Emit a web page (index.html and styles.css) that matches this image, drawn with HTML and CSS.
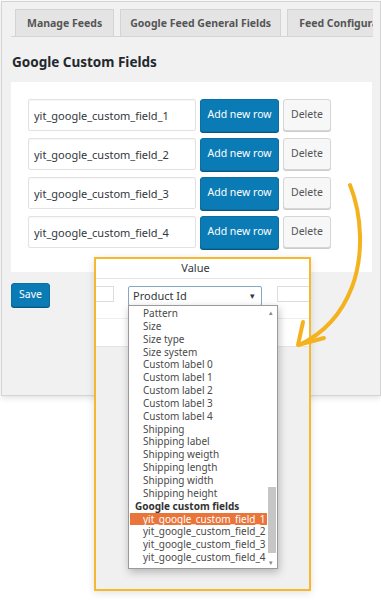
FILE: index.html
```html
<!DOCTYPE html>
<html lang="en">
<head>
      <meta charset="UTF-8">
      <meta name="viewport" content="width=device-width, initial-scale=1.0">
      <title>Google Custom Fields</title>
      <link rel="stylesheet" href="styles.css">
</head>
<body>
      <div class="frame">
            <ul class="tabs">
                  <li>Manage Feeds</li>
                  <li class="tab-wide">Google Feed General Fields</li>
                  <li>Feed Configuration</li>
            </ul>

            <h2 class="title">Google Custom Fields</h2>

            <div class="fields">
                  <div class="field-row">
                        <input class="field-input" type="text" value="yit_google_custom_field_1">
                        <button class="btn btn-primary">Add new row</button>
                        <button class="btn btn-secondary">Delete</button>
                  </div>
                  <div class="field-row">
                        <input class="field-input" type="text" value="yit_google_custom_field_2">
                        <button class="btn btn-primary">Add new row</button>
                        <button class="btn btn-secondary">Delete</button>
                  </div>
                  <div class="field-row">
                        <input class="field-input" type="text" value="yit_google_custom_field_3">
                        <button class="btn btn-primary">Add new row</button>
                        <button class="btn btn-secondary">Delete</button>
                  </div>
                  <div class="field-row">
                        <input class="field-input" type="text" value="yit_google_custom_field_4">
                        <button class="btn btn-primary">Add new row</button>
                        <button class="btn btn-secondary">Delete</button>
                  </div>
            </div>

            <button class="btn btn-primary btn-save">Save</button>
      </div>

      <div class="zoom-popup">
            <div class="zoom-head">Value</div>
            <div class="zoom-row">
                  <span class="stub stub-left"></span>
                  <div class="fake-select">Product Id<span class="caret">&#9662;</span></div>
                  <span class="stub stub-right"></span>
            </div>
            <div class="zoom-row zoom-row-empty"></div>

            <div class="option-list">
                  <ul class="options">
                        <li>Pattern</li>
                        <li>Size</li>
                        <li>Size type</li>
                        <li>Size system</li>
                        <li>Custom label 0</li>
                        <li>Custom label 1</li>
                        <li>Custom label 2</li>
                        <li>Custom label 3</li>
                        <li>Custom label 4</li>
                        <li>Shipping</li>
                        <li>Shipping label</li>
                        <li>Shipping weigth</li>
                        <li>Shipping length</li>
                        <li>Shipping width</li>
                        <li>Shipping height</li>
                        <li class="group">Google custom fields</li>
                        <li class="selected">yit_google_custom_field_1</li>
                        <li>yit_google_custom_field_2</li>
                        <li>yit_google_custom_field_3</li>
                        <li>yit_google_custom_field_4</li>
                  </ul>
                  <div class="scrollbar">
                        <span class="arrow-up">&#9652;</span>
                        <span class="thumb"></span>
                        <span class="arrow-down">&#9662;</span>
                  </div>
            </div>
      </div>

      <svg class="pointer" width="90" height="175" viewBox="0 0 90 175">
            <path d="M60 10 C 72 40, 74 80, 62 112 C 52 138, 35 158, 9 170" fill="none" stroke="#f5b21f" stroke-width="4" stroke-linecap="round"/>
            <path d="M13 147 L 8 170 L 34 163" fill="none" stroke="#f5b21f" stroke-width="4" stroke-linecap="round" stroke-linejoin="round"/>
      </svg>
</body>
</html>
```

FILE: styles.css
```css
:root {
	--frame: #f1f1f1;
	--border: #d4d4d4;
	--blue: #0a7bb5;
	--text: #32373c;
	--orange: #f5b82e;
}
html {
	box-sizing: border-box;
}
*, *:before, *:after {
	box-sizing: inherit;
}
body {
	margin: 0;
	background: #fff;
	font-family: "Noto Sans", "Open Sans", sans-serif;
	color: var(--text);
	position: relative;
	min-height: 606px;
	overflow: hidden;
}
.frame {
	margin: 1px 0 0 1px;
	width: 380px;
	height: 395px;
	background: var(--frame);
	border: 1px solid var(--border);
	box-shadow: 0 2px 6px rgba(0, 0, 0, 0.12);
	padding: 7px 0 0 9px;
}
.tabs {
	list-style: none;
	margin: 0 7px 0 0;
	padding: 0 0 0 4px;
	display: flex;
	gap: 6px;
	border-bottom: 1px solid var(--border);
	height: 28px;
	white-space: nowrap;
	overflow: hidden;
}
.tabs li {
	background: #e4e4e4;
	border: 1px solid var(--border);
	border-bottom: none;
	font-size: 10.5px;
	font-weight: 700;
	color: #555;
	padding: 0 11px;
	line-height: 27px;
	flex-shrink: 0;
}
.tabs .tab-wide {
	padding: 0 9px;
}
.title {
	margin: 15px 0 0 1px;
	font-size: 13.5px;
	font-weight: 700;
	color: #23282d;
	line-height: 20px;
}
.fields {
	margin-top: 10px;
	width: 361px;
	background: #fff;
	padding: 17px 0 24px 17px;
	display: flex;
	flex-direction: column;
	gap: 7px;
}
.field-row {
	display: flex;
	align-items: center;
	gap: 4px;
	height: 32px;
}
.field-input {
	width: 168px;
	height: 32px;
	border: 1px solid #e2e2e2;
	border-radius: 2px;
	box-shadow: inset 0 1px 2px rgba(0, 0, 0, 0.04);
	font-family: inherit;
	font-size: 11px;
	color: var(--text);
	padding: 0 5px;
	margin: 0;
}
.btn {
	font-family: inherit;
	font-size: 10.5px;
	border-radius: 3px;
	margin: 0;
	padding: 0;
	white-space: nowrap;
	cursor: pointer;
}
.btn-primary {
	background: var(--blue);
	border: 1px solid #0a6fa3;
	color: #fff;
	width: 79px;
	height: 33px;
	padding-bottom: 3px;
	box-shadow: 0 1px 0 #06587f;
}
.btn-secondary {
	background: #f7f7f7;
	border: 1px solid #d6d6d6;
	color: #555;
	width: 48px;
	height: 32px;
	padding-bottom: 3px;
	box-shadow: 0 1px 0 #ccc;
}
.btn-save {
	margin-top: 11px;
	width: 39px;
	height: 24px;
	font-size: 10.5px;
	padding-bottom: 2px;
}

/* zoomed call-out */
.zoom-popup {
	position: absolute;
	left: 94px;
	top: 257px;
	width: 217px;
	height: 334px;
	border: 2px solid var(--orange);
	background: linear-gradient(#e6e6e6, #f0f0f0 30px);
	box-shadow: 0 2px 8px rgba(0, 0, 0, 0.12);
}
.zoom-head {
	background: #fff;
	height: 20px;
	line-height: 18px;
	font-size: 11px;
	text-align: center;
	padding-right: 14px;
	border-bottom: 1px solid #e4e4e4;
}
.zoom-row {
	background: #fff;
	height: 40px;
	display: flex;
	align-items: flex-start;
	padding-top: 7px;
	border-bottom: 1px solid #eee;
}
.zoom-row-empty {
	height: 28px;
	border-bottom: 1px solid #e4e4e4;
}
.stub {
	height: 16px;
	border: 1px solid #ddd;
	background: #fff;
}
.stub-left {
	width: 18px;
	border-left: none;
}
.stub-right {
	width: 32px;
	margin-left: 15px;
	border-right: none;
}
.fake-select {
	margin-left: 14px;
	width: 134px;
	height: 20px;
	border: 1px solid #86a8c6;
	border-radius: 2px;
	background: #fff;
	font-size: 11px;
	line-height: 18px;
	padding-left: 4px;
	position: relative;
}
.caret {
	position: absolute;
	right: 6px;
	top: 0;
	font-size: 9px;
}
.option-list {
	position: absolute;
	left: 32px;
	top: 46px;
	width: 150px;
	display: flex;
	background: #fff;
	border: 1px solid #9a9a9a;
	box-shadow: 1px 3px 8px rgba(0, 0, 0, 0.25);
}
.options {
	flex: 1;
	margin: 0;
	padding: 1px 0 4px;
	list-style: none;
	font-size: 10px;
	line-height: 12.85px;
	color: #4a4a4a;
}
.options li {
	padding-left: 14px;
	white-space: nowrap;
}
.options .group {
	padding-left: 6px;
	font-weight: 700;
	color: #333;
}
.options .selected {
	background: #e9753a;
	color: #fff;
	margin-left: 1px;
	padding-left: 13px;
}
.scrollbar {
	position: relative;
	width: 10px;
	flex-shrink: 0;
}
.arrow-up, .arrow-down {
	position: absolute;
	left: 2px;
	font-size: 7px;
	line-height: 8px;
	color: #888;
}
.arrow-up {
	top: 3px;
}
.arrow-down {
	bottom: 1px;
}
.thumb {
	position: absolute;
	left: 1px;
	right: 1px;
	top: 181px;
	height: 66px;
	background: #c6c6c6;
}
.pointer {
	position: absolute;
	left: 290px;
	top: 175px;
}
```
